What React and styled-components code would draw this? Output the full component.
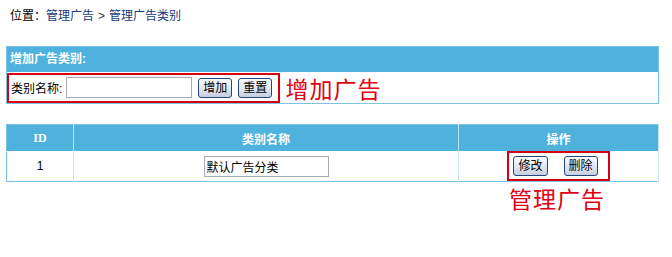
import React from 'react';
import styled, { createGlobalStyle } from 'styled-components';

const GlobalStyle = createGlobalStyle`
  body {
    margin: 0;
    background: #fff;
    font-family: "Liberation Sans", "Noto Sans CJK SC", sans-serif;
    font-size: 12px;
    color: #000;
  }
`;

const Page = styled.div`
  width: 653px;
  padding: 8px 0 0 6px;
`;

const Crumbs = styled.div`
  height: 16px;
  line-height: 16px;
  padding-left: 4px;
  color: #000;
`;

const CrumbLink = styled.a`
  color: #17397a;
  text-decoration: none;
`;

const Sep = styled.span`
  color: #333;
  margin: 0 4px;
`;

const Panel = styled.div`
  margin-top: 22px;
  border: 1px solid #7cc4e6;
`;

const PanelHead = styled.div`
  height: 25px;
  line-height: 25px;
  padding-left: 3px;
  background: #4fb2dd;
  color: #fff;
  font-weight: bold;
`;

const PanelBody = styled.div`
  display: flex;
  align-items: center;
  height: 31px;
`;

const Marked = styled.div`
  display: flex;
  align-items: center;
  gap: ${p => p.gap || 6}px;
  border: 2px solid #d7000f;
  padding: ${p => p.pad || '0 6px 0 2px'};
  height: ${p => p.h || 26}px;
  box-sizing: border-box;
`;

const Label = styled.span`
  margin-right: -2px;
`;

const TextBox = styled.input`
  width: ${p => p.w || 126}px;
  height: 21px;
  box-sizing: border-box;
  border: 1px solid #a5acb5;
  padding: 0 2px;
  font: inherit;
  color: #000;
  outline: none;
`;

const Btn = styled.button`
  height: 20px;
  padding: 0 4px;
  border: 1px solid #24467c;
  border-radius: 3px;
  background: linear-gradient(#fbfcfe 0%, #e3e9f2 50%, #c4cfe0 100%);
  font: inherit;
  color: #000;
  line-height: 18px;
  cursor: pointer;
`;

const Note = styled.span`
  color: #e00012;
  font-family: "Noto Sans CJK SC", sans-serif;
  font-size: 23px;
  letter-spacing: 1px;
  line-height: 26px;
  margin-left: ${p => p.ml || 0}px;
`;

const Grid = styled.table`
  margin-top: 20px;
  width: 100%;
  border-collapse: collapse;
  border: 1px solid #7cc4e6;
`;

const Th = styled.th`
  width: ${p => p.w ? `${p.w}px` : 'auto'};
  height: 26px;
  padding: 0;
  background: #4fb2dd;
  color: #fff;
  font-weight: bold;
  font-family: ${p => p.serif ? '"Liberation Serif", serif' : 'inherit'};
  border-right: 1px solid #bfe4f5;
  text-align: center;
`;

const Td = styled.td`
  height: 30px;
  padding: 0;
  text-align: center;
  border-right: 1px solid #c8e6f4;
`;

const Centre = styled.div`
  display: flex;
  justify-content: center;
`;

const Under = styled.div`
  display: flex;
  justify-content: flex-end;
  padding-top: 3px;
`;

const UnderCell = styled.div`
  width: 204px;
  text-align: center;
`;

export default function App() {
  return (
    <>
      <GlobalStyle />
      <Page>
        <Crumbs>
          位置：<CrumbLink href="#">管理广告</CrumbLink>
          <Sep>&gt;</Sep>
          <CrumbLink href="#">管理广告类别</CrumbLink>
        </Crumbs>

        <Panel>
          <PanelHead>增加广告类别:</PanelHead>
          <PanelBody>
            <Marked h={30}>
              <Label>类别名称:</Label>
              <TextBox />
              <Btn>增加</Btn>
              <Btn>重置</Btn>
            </Marked>
            <Note ml={5}>增加广告</Note>
          </PanelBody>
        </Panel>

        <Grid>
          <thead>
            <tr>
              <Th w={66} serif>ID</Th>
              <Th w={384}>类别名称</Th>
              <Th>操作</Th>
            </tr>
          </thead>
          <tbody>
            <tr>
              <Td>1</Td>
              <Td>
                <TextBox w={125} defaultValue="默认广告分类" />
              </Td>
              <Td>
                <Centre>
                  <Marked h={30} gap={16} pad="0 10px 0 4px">
                    <Btn>修改</Btn>
                    <Btn>删除</Btn>
                  </Marked>
                </Centre>
              </Td>
            </tr>
          </tbody>
        </Grid>

        <Under>
          <UnderCell>
            <Note>管理广告</Note>
          </UnderCell>
        </Under>
      </Page>
    </>
  );
}
